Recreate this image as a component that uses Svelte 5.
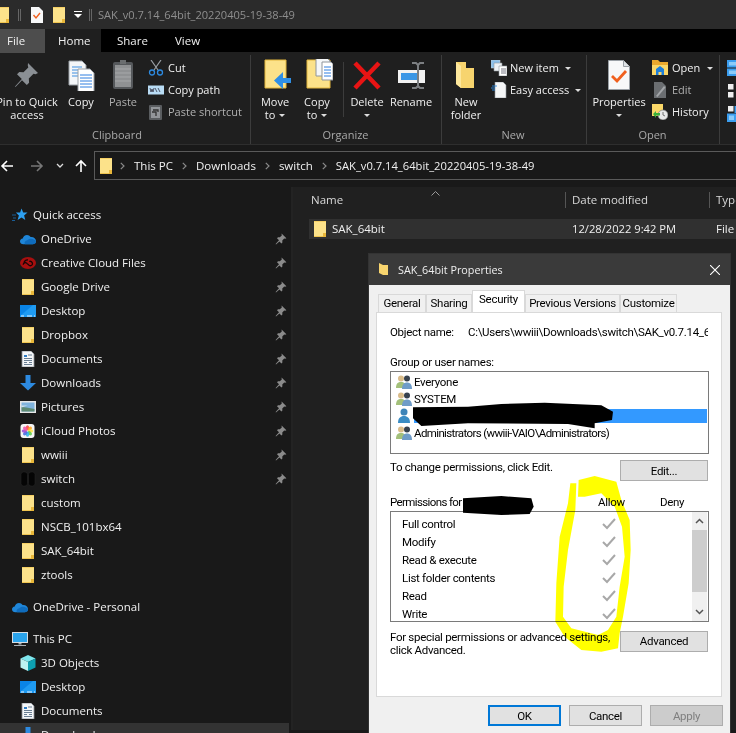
<script>
  const pinned = [
    ['cloud', 'OneDrive'], ['cc', 'Creative Cloud Files'], ['folder', 'Google Drive'],
    ['desktop', 'Desktop'], ['folder', 'Dropbox'], ['docs', 'Documents'],
    ['down', 'Downloads'], ['pics', 'Pictures'], ['photos', 'iCloud Photos'],
    ['folder', 'wwiii'], ['switch', 'switch']
  ];
  const unpinned = ['custom', 'NSCB_101bx64', 'SAK_64bit', 'ztools'];
  const pcItems = [['cube', '3D Objects'], ['desktop', 'Desktop'], ['docs', 'Documents']];
  const tabs = [['General', 48], ['Sharing', 46], ['Security', 53], ['Previous Versions', 95], ['Customize', 57]];
  const crumbs = ['This PC', 'Downloads', 'switch'];
  const perms = ['Full control', 'Modify', 'Read & execute', 'List folder contents', 'Read', 'Write'];
  const tints = ['#ff4b4b', '#ffa726', '#ffe14d', '#63d04f', '#36b6e8', '#4a6fe3', '#a050d8', '#ee5aa8'];
</script>

{#snippet folder()}
  <svg class="ic16" viewBox="0 0 16 16">
    <path d="M2 0h12v16H2z" fill="#fce28a" />
    <path d="M11 16v-4h3v4z" fill="#e9b73a" />
    <path d="M2 0h12v1H2z" fill="#f5cf64" />
    <path d="M2 15h9v1H2z" fill="#f0c550" />
  </svg>
{/snippet}

{#snippet pin(cls = 'pin')}
  <svg class={cls} viewBox="0 0 12 12">
    <path d="M6.600 0.600l4.800 4.600-1.300.6-.9-.2-1.900 2 .1 1.800-1 1-2-2L1 11.400l-.4-.4 3.400-3.800-2-2 1-1 1.800.1 2-1.900-.2-.9z" fill="#8b8b8b" />
  </svg>
{/snippet}

{#snippet navIcon(name)}
  {#if name === 'folder'}
    {@render folder()}
  {:else if name === 'cloud'}
    <svg class="ic16" viewBox="0 0 16 16">
      <path d="M3.400 13.200C1.400 13.200 0 12 0 10.400c0-1.500 1.100-2.700 2.700-2.800C3.100 5.500 4.900 4 7 4c1.500 0 2.800.7 3.600 2 2.900-.4 5.400 1.500 5.400 4.100 0 1.800-1.300 3.100-3.200 3.100z" fill="#1f86d8" />
      <path d="M5 13.200c-1-1.700.2-3.700 2.300-3.900 1-1.500 4.600-2.400 6.900-.6 1.200.7 1.800 1.700 1.800 2.600-.2 1.100-1.300 1.900-3.200 1.900z" fill="#0f6cbd" />
    </svg>
  {:else if name === 'cc'}
    <svg class="ic16" viewBox="0 0 16 16">
      <ellipse cx="8" cy="8" rx="8" ry="6" fill="#a80f0f" />
      <path d="M3.200 9.800c0-2 2.400-2.800 3.700-1.400l2.200 1.900c1.400 1 3.400 0 3.400-1.500 0-2-2-3-3.300-2.300M4 8c.2-2 2-3.300 4-3" fill="none" stroke="#1a0505" stroke-width="1.300" />
    </svg>
  {:else if name === 'desktop'}
    <svg class="ic16" viewBox="0 0 16 16">
      <path d="M0 2h16v12H0z" fill="#0a84e6" />
      <path d="M0 13L13 2h3v12H0z" fill="#1f9bf2" />
      <path d="M1 12.500h3v1H1zM14 12.500h1v1h-1zM7 12.500h5v1H7z" fill="#e8f4ff" />
    </svg>
  {:else if name === 'docs'}
    <svg class="ic16" viewBox="0 0 16 16">
      <path d="M2 0h9l3 3v13H2z" fill="#f4f6f8" stroke="#8a8f96" stroke-width=".8" />
      <path d="M4 4h3v2H4z" fill="#2e7cc4" />
      <path d="M8 4h4M4 7.500h8M4 9.500h8M4 11.500h3M9 11.500h3M4 13.500h8" stroke="#5a7186" stroke-width=".9" />
    </svg>
  {:else if name === 'down'}
    <svg class="ic16" viewBox="0 0 16 16">
      <path d="M5.500 0h5v8H16l-8 7.500L0 8h5.500z" fill="#2d8ae0" />
    </svg>
  {:else if name === 'pics'}
    <svg class="ic16" viewBox="0 0 16 16">
      <path d="M0 2h16v12H0z" fill="#e6e6e6" />
      <path d="M1.500 3.500h13v9h-13z" fill="#7fb3dd" />
      <path d="M1.500 8l5 .5 8 1.500v2.500h-13z" fill="#5e8a72" />
      <path d="M1.500 6.500h6l-6 2z" fill="#cfe0ea" />
    </svg>
  {:else if name === 'photos'}
    <svg class="ic16" viewBox="0 0 16 16">
      <rect x=".5" y="1" width="14" height="14" rx="3" fill="#f5f5f5" />
      {#each tints as tint, i}
        <ellipse cx="7.500" cy="4.800" rx="1.700" ry="2.600" fill={tint} opacity=".9" transform="rotate({i * 45} 7.500 8)" />
      {/each}
    </svg>
  {:else if name === 'switch'}
    <svg class="ic16" viewBox="0 0 16 16">
      <rect x="1" y="1" width="6.500" height="14" rx="2.500" fill="#050505" stroke="#2a2a2a" stroke-width=".5" />
      <rect x="8.500" y="1" width="6.500" height="14" rx="2.500" fill="#050505" stroke="#2a2a2a" stroke-width=".5" />
    </svg>
  {:else if name === 'cube'}
    <svg class="ic16" viewBox="0 0 16 16">
      <path d="M8 0l7.500 3.500L8 7 .5 3.500z" fill="#7fe6ec" />
      <path d="M.5 3.500L8 7v9L.5 12.500z" fill="#bdf2f2" />
      <path d="M15.500 3.500L8 7v9l7.500-3.500z" fill="#0d9fb0" />
    </svg>
  {:else if name === 'star'}
    <svg class="ic16" viewBox="0 0 16 16">
      <path d="M9.500 1.500l1.700 4h4.300l-3.400 2.900 1.200 4.600-3.800-2.600-3.900 2.600 1.300-4.600-3-2.900h4.200z" fill="#2d9ff0" />
      <path d="M0 8h4M1 11h3M0 13.500h3" stroke="#1a6fb5" stroke-width=".8" />
    </svg>
  {:else if name === 'pc'}
    <svg class="ic16" viewBox="0 0 16 16">
      <path d="M0 1h16v11H0z" fill="#d8dde2" />
      <path d="M1 2h14v9H1z" fill="#2ba4ec" />
      <path d="M6.500 12h3v1.500h-3zM2 14h12v1H2z" fill="#a9afb5" />
    </svg>
  {/if}
{/snippet}

{#snippet ribbonIcon(name)}
  {#if name === 'pin'}
    <svg class="ic32" viewBox="0 0 32 32">
      <path d="M17 4l10 10-2.500 1.200-2-.5-4.700 4.800.3 4.200-2.300 2.300-4.800-4.800L4.500 28 4 27.500l6.800-7.500-4.800-4.800 2.300-2.300 4.200.3 4.800-4.700-.5-2z" fill="#8a8f94" />
    </svg>
  {:else if name === 'copy'}
    <svg class="ic32" viewBox="0 0 32 32">
      <path d="M4 2h13l4 4v20H4z" fill="#f4f6f8" stroke="#9aa0a6" />
      <path d="M7 8h10M7 11h10M7 14h10M7 17h10" stroke="#3f8fe0" />
      <path d="M13 10h12l4 4v19H13z" fill="#fff" stroke="#9aa0a6" />
      <path d="M15 16h12M15 19h12M15 22h12M15 25h12M15 28h12" stroke="#2f7fe0" />
    </svg>
  {:else if name === 'paste'}
    <svg class="ic32" viewBox="0 0 32 32">
      <rect x="6" y="3" width="20" height="27" rx="2" fill="#55585b" />
      <rect x="8" y="6" width="16" height="22" fill="#8f9193" />
      <path d="M8 10h16M8 14h16M8 18h16M8 22h16" stroke="#a6a8aa" />
      <path d="M13 1h6v4h-6z" fill="#6b6e70" />
    </svg>
  {:else if name === 'move'}
    <svg class="ic32" viewBox="0 0 32 32">
      <path d="M6 1h21v28H6z" fill="#fce28a" stroke="#e3b63c" />
      <path d="M32 19h-8v-6l-9 8.500 9 8.500v-6h8z" fill="#2f8fe6" />
    </svg>
  {:else if name === 'copyto'}
    <svg class="ic32" viewBox="0 0 32 32">
      <path d="M6 1h23v28H6z" fill="#fce28a" stroke="#e3b63c" />
      <path d="M15 -1h11l3 3v15H15z" fill="#f5f7f9" stroke="#8f959b" />
      <path d="M21 3h9l2 2v16H21z" fill="#fff" stroke="#8f959b" />
      <path d="M23 8h7M23 11h7M23 14h7M23 17h7" stroke="#2f7fe0" />
    </svg>
  {:else if name === 'delete'}
    <svg class="ic32" viewBox="0 0 32 32">
      <path d="M4 4l24 25M28 4L4 29" stroke="#e81414" stroke-width="4.500" fill="none" />
    </svg>
  {:else if name === 'rename'}
    <svg class="ic32" viewBox="0 0 32 32">
      <path d="M3 11h27v13H3z" fill="#f2f2f2" />
      <path d="M6 14h16v7H6z" fill="#3b97e6" />
      <path d="M17 4h4l2 2 2-2h4M23 6v23M17 29h4l2-2 2 2h4" stroke="#7c7f82" stroke-width="2" fill="none" />
    </svg>
  {:else if name === 'newfolder'}
    <svg class="ic32" viewBox="0 0 32 32">
      <path d="M6 3h10v6h8v20H11l-5-4z" fill="#f7d46e" />
      <path d="M6 3l5 4v22l-5-4z" fill="#fde79c" />
    </svg>
  {:else if name === 'props'}
    <svg class="ic32" viewBox="0 0 32 32">
      <path d="M5.500 1.500h15l6 6v23h-21z" fill="#f7f8f9" stroke="#9aa0a6" />
      <path d="M20.500 1.500v6h6" fill="#dfe3e6" stroke="#9aa0a6" />
      <path d="M9 17l5 5 9-10" fill="none" stroke="#f0601e" stroke-width="2.800" />
    </svg>
  {/if}
{/snippet}

{#snippet smallIcon(name)}
  {#if name === 'cut'}
    <svg class="ic16" viewBox="0 0 16 16">
      <path d="M3 0l7 10M13 0L6 10" stroke="#9aa0a6" stroke-width="1.200" />
      <circle cx="4" cy="12.500" r="2.500" fill="none" stroke="#2d8ae0" stroke-width="1.300" />
      <circle cx="12" cy="12.500" r="2.500" fill="none" stroke="#2d8ae0" stroke-width="1.300" />
    </svg>
  {:else if name === 'path'}
    <svg class="ic16" viewBox="0 0 16 16">
      <path d="M0 3.500h16v9H0z" fill="#b9dcf5" />
      <path d="M2 6l1 4 1-3 1 3 1-4M7 6l2 4M10 6l2 4" stroke="#334" stroke-width=".8" fill="none" />
    </svg>
  {:else if name === 'shortcut'}
    <svg class="ic16" viewBox="0 0 16 16">
      <rect x="1" y="1" width="13" height="15" rx="1" fill="#5a5d60" />
      <rect x="3" y="3" width="9" height="11" fill="#93969a" />
      <path d="M4 8h4v4M5 6h5v2" stroke="#333" stroke-width="1.300" fill="none" />
    </svg>
  {:else if name === 'newitem'}
    <svg class="ic16" viewBox="0 0 16 16">
      <path d="M0 0h9v8H0z" fill="#8dc0ea" stroke="#c8ccd0" stroke-width=".6" />
      <path d="M3 3h8v8H3z" fill="#eef1f4" stroke="#8f959b" stroke-width=".6" />
      <path d="M8 6h8v10H8z" fill="#fff" stroke="#8f959b" stroke-width=".6" />
      <path d="M10 9h5M10 11h5M10 13h5" stroke="#556" stroke-width=".8" />
    </svg>
  {:else if name === 'easy'}
    <svg class="ic16" viewBox="0 0 16 16">
      <path d="M4 0h8l3 3v13H4z" fill="#f5f6f7" stroke="#8f959b" stroke-width=".6" />
      <path d="M1 4h5M0 6h4M1 8h3" stroke="#2d8ae0" stroke-width=".9" />
    </svg>
  {:else if name === 'open'}
    <svg class="ic16" viewBox="0 0 16 16">
      <path d="M0 0h6l2 2h8v4H0z" fill="#eba92e" />
      <path d="M0 5h16v10H0z" fill="#fbd868" />
      <path d="M4 15V9l4-3 4 3v6H9.500v-3h-3v3z" fill="#1f7fd9" />
    </svg>
  {:else if name === 'edit'}
    <svg class="ic16" viewBox="0 0 16 16">
      <path d="M2 0h8l4 4v12H2z" fill="#6b6e71" />
      <path d="M4 14l8-10 1.500 1.500L5.500 15z" fill="#a2a5a8" />
    </svg>
  {:else if name === 'history'}
    <svg class="ic16" viewBox="0 0 16 16">
      <path d="M0 0h11v12H0z" fill="#fbd868" />
      <circle cx="11" cy="11" r="5" fill="#e8e8e8" stroke="#7a7a7a" stroke-width=".7" />
      <path d="M11 8v3l2 1" stroke="#555" stroke-width=".8" fill="none" />
      <path d="M1 10l3-3v2h4v2.500H4V14z" fill="#3bb03b" />
    </svg>
  {/if}
{/snippet}

{#snippet people(blue = false)}
  <svg class="people" viewBox="0 0 16 16">
    {#if blue}
      <circle cx="8" cy="4" r="3.500" fill="#3d84b8" />
      <path d="M2 15c0-5 2.500-7 6-7s6 2 6 7z" fill="#3a8cc4" />
    {:else}
      <circle cx="5" cy="4.500" r="3" fill="#d9bc8a" />
      <path d="M0 14c0-4.500 2-6 5-6s5 1.500 5 6z" fill="#a3c07a" />
      <circle cx="11" cy="4.500" r="3" fill="#37414d" />
      <path d="M6 15c0-4.500 2-6.500 5-6.500s5 2 5 6.500z" fill="#6f9cc8" />
    {/if}
  </svg>
{/snippet}

{#snippet big(cls, icon, first, second, caret)}
  <div class="big {cls}">
    {@render ribbonIcon(icon)}
    <span class="big-label">{first}</span>
    <span class="big-label">{second}{#if caret}<i class="caret"></i>{/if}</span>
  </div>
{/snippet}

{#snippet small(icon, label, caret = false, dim = false)}
  <div class="small" class:dim>
    {@render smallIcon(icon)}
    <span>{label}</span>
    {#if caret}<i class="caret"></i>{/if}
  </div>
{/snippet}

{#snippet chev()}
  <svg class="chev" viewBox="0 0 5 8"><path d="M.8.8L4 4 .8 7.200" fill="none" stroke="#8a8a8a" stroke-width="1.200" /></svg>
{/snippet}

<div class="screen">
  <header class="titlebar">
    <div class="clip-folder">{@render folder()}</div>
    <i class="bar"></i>
    <svg class="qat-doc" viewBox="0 0 12 16">
      <path d="M0 0h8l4 4v12H0z" fill="#f7f8f9" />
      <path d="M2.500 8l2.500 3 4-5" fill="none" stroke="#f0601e" stroke-width="1.400" />
    </svg>
    <div class="qat-folder">{@render folder()}</div>
    <svg class="qat-menu" viewBox="0 0 8 7">
      <path d="M0 0h8v1H0zM0 3h8L4 7z" fill="#fff" />
    </svg>
    <i class="bar"></i>
    <span class="title">SAK_v0.7.14_64bit_20220405-19-38-49</span>
  </header>

  <nav class="tabs">
    <span class="tab file">File</span>
    <span class="tab home">Home</span>
    <span class="tab share">Share</span>
    <span class="tab view">View</span>
  </nav>

  <section class="ribbon">
    <div class="group clipboard">
      <div class="tools">
        <div class="big w-pin">
          {@render ribbonIcon('pin')}
          <span class="big-label">Pin to Quick</span>
          <span class="big-label">access</span>
        </div>
        <div class="big w-42">
          {@render ribbonIcon('copy')}
          <span class="big-label">Copy</span>
        </div>
        <div class="big w-42 dim">
          {@render ribbonIcon('paste')}
          <span class="big-label">Paste</span>
        </div>
        <div class="stack">
          {@render small('cut', 'Cut')}
          {@render small('path', 'Copy path')}
          {@render small('shortcut', 'Paste shortcut', false, true)}
        </div>
      </div>
      <div class="group-name">Clipboard</div>
    </div>

    <div class="group organize">
      <div class="tools">
        {@render big('w-42', 'move', 'Move', 'to', true)}
        {@render big('w-42', 'copyto', 'Copy', 'to', true)}
        <i class="ribbon-sep"></i>
        <div class="big w-36">
          {@render ribbonIcon('delete')}
          <span class="big-label">Delete</span>
          <span class="big-label"><i class="caret solo"></i></span>
        </div>
        <div class="big w-42">
          {@render ribbonIcon('rename')}
          <span class="big-label">Rename</span>
        </div>
      </div>
      <div class="group-name">Organize</div>
    </div>

    <div class="group new">
      <div class="tools">
        {@render big('w-44', 'newfolder', 'New', 'folder', false)}
        <div class="stack">
          {@render small('newitem', 'New item', true)}
          {@render small('easy', 'Easy access', true)}
        </div>
      </div>
      <div class="group-name">New</div>
    </div>

    <div class="group open">
      <div class="tools">
        <div class="big w-58">
          {@render ribbonIcon('props')}
          <span class="big-label">Properties</span>
          <span class="big-label"><i class="caret solo"></i></span>
        </div>
        <div class="stack">
          {@render small('open', 'Open', true)}
          {@render small('edit', 'Edit', false, true)}
          {@render small('history', 'History')}
        </div>
      </div>
      <div class="group-name">Open</div>
    </div>

    <div class="select-icons">
      <svg viewBox="0 0 16 16" class="ic16">
        <path d="M0 0h16v7.500H0zM0 8.500h16V16H0z" fill="#3b9ef0" />
        <path d="M2 2h12v3.500H2zM2 10.500h12V14H2z" fill="#8ccbf8" />
      </svg>
      <svg viewBox="0 0 16 16" class="ic16">
        <path d="M1 1h5.500v5.500H1zM1 9h5.500v5.500H1z" fill="#eee" />
      </svg>
      <svg viewBox="0 0 16 16" class="ic16">
        <path d="M1 0h5.500v5.500H1z" fill="#eee" />
        <path d="M7.500 0H16v7H7.500zM0 7.500h9V16H0z" fill="#3b9ef0" />
        <path d="M2 9.500h5V14H2z" fill="#8ccbf8" />
      </svg>
    </div>
  </section>

  <section class="addressbar">
    <div class="nav-arrows">
      <svg viewBox="0 0 14 14" class="arrow"><path d="M13 7H2M7 2L2 7l5 5" fill="none" stroke="#fff" stroke-width="1.600" /></svg>
      <svg viewBox="0 0 14 14" class="arrow"><path d="M1 7h11M7 2l5 5-5 5" fill="none" stroke="#777" stroke-width="1.600" /></svg>
      <svg viewBox="0 0 8 6" class="mini"><path d="M1 1l3 3 3-3" fill="none" stroke="#ddd" stroke-width="1.300" /></svg>
      <svg viewBox="0 0 14 14" class="arrow"><path d="M7 13V2M2 7l5-5 5 5" fill="none" stroke="#fff" stroke-width="1.600" /></svg>
    </div>
    <div class="crumbs">
      <div class="crumb-folder">{@render folder()}</div>
      {#each crumbs as crumb}
        {@render chev()}<span>{crumb}</span>
      {/each}
      {@render chev()}<span class="crumb-last">SAK_v0.7.14_64bit_20220405-19-38-49</span>
    </div>
  </section>

  <main class="body">
    <aside class="sidebar">
      <div class="row top">{@render navIcon('star')}<span>Quick access</span></div>
      {#each pinned as [icon, label]}
        <div class="row">
          {@render navIcon(icon)}<span>{label}</span>
          {@render pin()}
        </div>
      {/each}
      {#each unpinned as label}
        <div class="row">{@render navIcon('folder')}<span>{label}</span></div>
      {/each}
      <div class="row top spaced">{@render navIcon('cloud')}<span>OneDrive - Personal</span></div>
      <div class="row top spaced">{@render navIcon('pc')}<span>This PC</span></div>
      {#each pcItems as [icon, label]}
        <div class="row">{@render navIcon(icon)}<span>{label}</span></div>
      {/each}
      <div class="row hot">{@render navIcon('down')}<span>Downloads</span></div>
    </aside>

    <div class="files">
      <div class="file-head">
        <div class="col-name">Name<svg class="sort" viewBox="0 0 9 5"><path d="M.5 4.500l4-4 4 4" fill="none" stroke="#999" /></svg></div>
        <div class="col-date">Date modified</div>
        <div class="col-type">Type</div>
      </div>
      <div class="file-row">
        <div class="col-name cell">{@render folder()}<span>SAK_64bit</span></div>
        <div class="col-date cell">12/28/2022 9:42 PM</div>
        <div class="col-type cell">File</div>
      </div>
    </div>
  </main>

  <div class="dialog">
    <div class="dialog-title">
      <svg class="dialog-folder" viewBox="0 0 10 14">
        <path d="M0 0l4 2h5v10H4l-4-2z" fill="#f7d46e" />
      </svg>
      <span>SAK_64bit Properties</span>
      <svg class="close" viewBox="0 0 10 10"><path d="M0 0l10 10M10 0L0 10" stroke="#fff" stroke-width="1.100" /></svg>
    </div>
    <div class="dialog-body">
      <div class="dialog-tabs">
        {#each tabs as [tab, width]}
          <span class="dialog-tab" class:active={tab === 'Security'} style:width="{width}px">{tab}</span>
        {/each}
      </div>
      <div class="sheet">
        <div class="object"><span class="object-label">Object name:</span><span class="object-path">C:\Users\wwiii\Downloads\switch\SAK_v0.7.14_64bit_20220405-19-38-49</span></div>
        <div class="label-gap">Group or user names:</div>
        <div class="users">
          <div class="user">{@render people()}<span>Everyone</span></div>
          <div class="user">{@render people()}<span>SYSTEM</span></div>
          <div class="user">{@render people(true)}<span class="selected">&nbsp;</span></div>
          <div class="user">{@render people()}<span class="tight">Administrators (wwiii-VAIO\Administrators)</span></div>
        </div>
        <div class="edit-row"><span>To change permissions, click Edit.</span><button>Edit...</button></div>
        <div class="perm-head"><span class="perm-for"><span class="tight">Permissions for</span></span><span class="allow">Allow</span><span class="deny">Deny</span></div>
        <div class="perms">
          <div class="perm-list">
            {#each perms as perm}
              <div class="perm">
                <span>{perm}</span>
                <svg class="check" viewBox="0 0 14 12"><path d="M1 6l4 4 8-9" fill="none" stroke="#a8a8a8" stroke-width="2" /></svg>
              </div>
            {/each}
          </div>
          <div class="scroll">
            <svg viewBox="0 0 9 6" class="scroll-arrow"><path d="M1 5l3.500-3.500L8 5" fill="none" stroke="#555" stroke-width="1.500" /></svg>
            <div class="thumb"></div>
            <svg viewBox="0 0 9 6" class="scroll-arrow"><path d="M1 1l3.500 3.500L8 1" fill="none" stroke="#555" stroke-width="1.500" /></svg>
          </div>
        </div>
        <div class="advanced-row">
          <span>For special permissions or advanced settings,<br />click Advanced.</span>
          <button>Advanced</button>
        </div>
      </div>
      <div class="dialog-actions">
        <button class="primary">OK</button>
        <button>Cancel</button>
        <button class="disabled">Apply</button>
      </div>
    </div>
  </div>

  <!-- marker scribbles drawn on top of the screenshot -->
  <svg class="scribble" viewBox="0 0 2208 2199">
    <path class="marker" transform="translate(1104 1410)" d="M630 80L632 30 680 18 745 35 760 90 785 150 788 240 782 340 765 440 755 490 750 535 700 545 640 540 590 500 562 455 565 340 575 200 600 100 607 40 625 40 622 120 600 240 587 350 585 440 610 475 690 495 720 480 745 440 755 350 770 260 762 170 740 110 700 70 650 80Z" />
    <path transform="translate(1104 750)" d="M135 472L300 470 400 462 530 458 700 466 735 485 732 510 680 520 680 535 600 522 300 520 160 528 135 505Z" fill="#000" />
    <path transform="translate(1104 1410)" d="M285 85L400 78 490 85 497 110 485 132 400 135 285 128Z" fill="#000" />
  </svg>
</div>

<style>
  :global(body) {
    margin: 0;
    background: #191919;
  }

  .screen {
    position: relative;
    width: 736px;
    height: 733px;
    overflow: hidden;
    background: #191919;
    color: #f0f0f0;
    font: 11.5px/16px "Open Sans", "Noto Sans", sans-serif;
  }

  svg {
    display: block;
    flex: none;
  }

  .ic16 {
    width: 16px;
    height: 16px;
  }

  .ic32 {
    width: 32px;
    height: 32px;
  }

  /* title bar */
  .titlebar {
    display: flex;
    align-items: center;
    height: 29px;
    background: #2b2b2b;
  }

  .clip-folder {
    margin-left: -5px;
  }

  .bar {
    width: 3px;
    height: 12px;
    margin: 0 0 0 7px;
    border: solid #666;
    border-width: 0 1px;
    box-sizing: border-box;
  }

  .qat-doc {
    width: 12px;
    height: 16px;
    margin-left: 10px;
  }

  .qat-folder {
    margin-left: 8px;
  }

  .qat-menu {
    width: 8px;
    height: 7px;
    margin-left: 7px;
  }

  .title {
    margin-left: 6px;
    color: #8f8f8f;
    font-size: 11.1px;
  }

  /* tabs */
  .tabs {
    display: flex;
    height: 23px;
    background: #000;
    line-height: 23px;
  }

  .tab {
    box-sizing: border-box;
    height: 24px;
  }

  .file {
    width: 45px;
    padding-left: 7px;
    background: #4d4d4d;
  }

  .home {
    width: 56px;
    padding-left: 13px;
    background: #1f1f1f;
  }

  .share {
    width: 58px;
    padding-left: 16px;
  }

  .view {
    width: 45px;
    padding-left: 16px;
  }

  /* ribbon */
  .ribbon {
    display: flex;
    height: 93px;
    box-sizing: border-box;
    padding-top: 3px;
    background: #1f1f1f;
    border-bottom: 1px solid #2e2e2e;
    font-size: 11px;
    overflow: hidden;
  }

  .group {
    display: flex;
    flex-direction: column;
    flex: none;
    box-sizing: border-box;
    border-right: 1px solid #3c3c3c;
  }

  .clipboard {
    width: 254px;
    margin-left: -3px;
  }

  .clipboard .group-name {
    padding-right: 13px;
  }

  .organize {
    width: 191px;
    padding-left: 3px;
  }

  .new {
    width: 145px;
    padding-left: 2px;
  }

  .open {
    width: 133px;
    padding-left: 3px;
  }

  .tools {
    display: flex;
    height: 72px;
  }

  .group-name {
    height: 17px;
    padding-right: 4px;
    color: #a9a9a9;
    text-align: center;
  }

  .big {
    display: flex;
    flex-direction: column;
    flex: none;
    align-items: center;
    padding-top: 4px;
    line-height: 13px;
  }

  .big .ic32 {
    margin-bottom: 4px;
  }

  .big-label {
    height: 13px;
    white-space: nowrap;
  }

  .w-pin {
    width: 60px;
    margin-right: 3px;
  }

  .w-36 {
    width: 36px;
    margin-right: 5px;
  }

  .w-42 {
    width: 42px;
  }

  .w-44 {
    width: 44px;
  }

  .w-58 {
    width: 58px;
  }

  .dim {
    color: #b0b0b0;
  }

  .caret {
    display: inline-block;
    margin: 0 0 2px 4px;
    border: solid transparent;
    border-width: 3px 3px 0;
    border-top-color: #ddd;
  }

  .caret.solo {
    margin-left: 0;
  }

  .ribbon-sep {
    width: 1px;
    height: 55px;
    margin: 7px 5px 0;
    background: #3c3c3c;
  }

  .stack {
    display: flex;
    flex-direction: column;
    gap: 6px;
    padding: 5px 0 0 4px;
  }

  .new .stack {
    padding-left: 3px;
  }

  .new .small {
    gap: 3px;
  }

  .small {
    display: flex;
    align-items: center;
    gap: 4px;
    height: 16px;
    white-space: nowrap;
  }

  .small .caret {
    margin: 0 0 0 3px;
  }

  .select-icons {
    display: flex;
    flex-direction: column;
    gap: 7px;
    padding: 5px 0 0 7px;
  }

  /* address bar */
  .addressbar {
    display: flex;
    height: 45px;
    box-sizing: border-box;
    padding-top: 6px;
    background: #191919;
  }

  .nav-arrows {
    display: flex;
    align-items: center;
    flex: none;
    gap: 16px;
    width: 94px;
    height: 29px;
    box-sizing: border-box;
  }

  .arrow {
    width: 14px;
    height: 14px;
  }

  .mini {
    width: 8px;
    height: 6px;
    margin: 0 -6px 0 -4px;
  }

  .crumbs {
    display: flex;
    flex: 1;
    align-items: center;
    gap: 9px;
    height: 29px;
    padding-left: 3px;
    box-sizing: border-box;
    border: 1px solid #5a5a5a;
    border-right: 0;
    white-space: nowrap;
  }

  .crumb-folder {
    margin-right: -3px;
  }

  .crumb-last {
    font-size: 11.2px;
  }

  .chev {
    width: 5px;
    height: 8px;
  }

  /* sidebar + files */
  .body {
    display: flex;
    height: 543px;
    margin-top: -3px;
  }

  .sidebar {
    flex: none;
    width: 291px;
    box-sizing: border-box;
    padding-top: 16px;
  }

  .row {
    display: flex;
    align-items: center;
    gap: 5px;
    height: 24px;
    padding: 0 4px 0 20px;
  }

  .row span {
    flex: 1;
    white-space: nowrap;
  }

  .row.top {
    padding-left: 12px;
  }

  .row.spaced {
    margin-top: 8px;
  }

  .row.hot {
    background: #333;
    margin-right: 2px;
  }

  .pin {
    width: 12px;
    height: 12px;
  }

  .files {
    flex: 1;
    background: #202020;
    border-left: 2px solid #232323;
  }

  .file-head {
    display: flex;
    align-items: center;
    height: 25px;
    margin-bottom: 7px;
    color: #d8d8d8;
  }

  .file-row {
    display: flex;
    align-items: center;
    height: 20px;
    margin-left: 16px;
    background: #303030;
  }

  .col-name {
    position: relative;
    box-sizing: border-box;
    width: 272px;
    padding-left: 18px;
    flex: none;
  }

  .sort {
    position: absolute;
    top: -1px;
    left: 138px;
    width: 9px;
    height: 5px;
  }

  .col-date {
    box-sizing: border-box;
    width: 144px;
    padding-left: 6px;
    flex: none;
    border-left: 1px solid #555;
    white-space: nowrap;
  }

  .col-type {
    padding-left: 6px;
    border-left: 1px solid #555;
  }

  .cell {
    border: 0;
  }

  .col-name.cell {
    display: flex;
    align-items: center;
    gap: 4px;
    width: 256px;
    padding-left: 3px;
  }

  .col-date.cell {
    padding-left: 7px;
    font-size: 11.2px;
  }

  .col-type.cell {
    padding-left: 7px;
  }

  /* properties dialog */
  .dialog {
    position: absolute;
    top: 254px;
    left: 369px;
    width: 361px;
    height: 490px;
    color: #000;
    font-family: Roboto, "Liberation Sans", sans-serif;
    font-size: 11.5px;
    line-height: 14px;
    letter-spacing: -0.3px;
    box-shadow: 0 0 0 1px #333;
  }

  .dialog-title {
    display: flex;
    align-items: center;
    gap: 9px;
    height: 31px;
    padding-left: 10px;
    background: #3a3a3a;
    color: #eee;
    font-family: "Open Sans", sans-serif;
    font-size: 10.8px;
    letter-spacing: 0;
  }

  .dialog-folder {
    width: 10px;
    height: 14px;
  }

  .close {
    width: 10px;
    height: 10px;
    margin-left: auto;
    margin-right: 10px;
  }

  .dialog-body {
    height: 459px;
    box-sizing: border-box;
    padding: 8px 7px 0;
    background: #f0f0f0;
  }

  .dialog-tabs {
    position: relative;
    z-index: 1;
    display: flex;
    align-items: flex-end;
    height: 19px;
    padding-left: 2px;
  }

  .dialog-tab {
    box-sizing: border-box;
    flex: none;
    height: 18px;
    padding-top: 1px;
    background: #f0f0f0;
    border: 1px solid #d9d9d9;
    border-bottom: 0;
    text-align: center;
    white-space: nowrap;
  }

  .dialog-tab.active {
    height: 22px;
    background: #fff;
  }

  .sheet {
    box-sizing: border-box;
    width: 346px;
    height: 385px;
    padding: 12px 13px 0;
    background: #fff;
    border: 1px solid #d9d9d9;
  }

  .object {
    display: flex;
    white-space: nowrap;
    overflow: hidden;
    width: 318px;
  }

  .object-label {
    flex: none;
    width: 78px;
  }

  .label-gap {
    margin-top: 16px;
  }

  .users {
    box-sizing: border-box;
    width: 319px;
    height: 83px;
    margin-top: 2px;
    padding: 1px;
    border: 1px solid #7a7a7a;
  }

  .user {
    display: flex;
    align-items: center;
    height: 17px;
    padding-left: 4px;
    gap: 2px;
  }

  .people {
    width: 16px;
    height: 16px;
  }

  .selected {
    flex: 1;
    background: #3399ff;
  }

  .tight {
    letter-spacing: -0.62px;
  }

  .edit-row,
  .advanced-row {
    display: flex;
    align-items: flex-start;
    justify-content: space-between;
    width: 318px;
  }

  .edit-row {
    margin-top: 6px;
  }

  button {
    box-sizing: border-box;
    flex: none;
    width: 88px;
    height: 21px;
    padding: 0;
    background: #e1e1e1;
    border: 1px solid #adadad;
    color: #000;
    font: inherit;
    letter-spacing: inherit;
  }

  .perm-head {
    display: flex;
    margin-top: 14px;
  }

  .perm-for {
    width: 208px;
  }

  .allow {
    width: 62px;
  }

  .perms {
    display: flex;
    box-sizing: border-box;
    width: 319px;
    height: 111px;
    margin-top: 2px;
    border: 1px solid #7a7a7a;
    overflow: hidden;
  }

  .perm-list {
    flex: 1;
    padding: 3px 0 0 11px;
  }

  .perm {
    display: flex;
    align-items: center;
    justify-content: space-between;
    height: 18px;
    padding-right: 76px;
  }

  .check {
    width: 14px;
    height: 12px;
  }

  .scroll {
    display: flex;
    flex-direction: column;
    align-items: center;
    flex: none;
    width: 15px;
    margin-right: 1px;
    background: #f0f0f0;
  }

  .scroll-arrow {
    width: 9px;
    height: 6px;
    margin: 6px 0;
  }

  .thumb {
    width: 100%;
    height: 62px;
    background: #cdcdcd;
  }

  .scroll-arrow:last-child {
    margin-top: auto;
  }

  .advanced-row {
    margin-top: 9px;
    line-height: 13px;
  }

  .dialog-actions {
    display: flex;
    justify-content: flex-end;
    gap: 8px;
    margin-top: 8px;
  }

  .dialog-actions button {
    width: 73px;
  }

  .primary {
    border: 2px solid #0078d7;
  }

  .disabled {
    background: #ccc;
    color: #7f7f7f;
  }

  .scribble {
    position: absolute;
    inset: 0;
    width: 736px;
    height: 733px;
    pointer-events: none;
  }

  .marker {
    fill: #ffff00;
    mix-blend-mode: multiply;
  }
</style>
